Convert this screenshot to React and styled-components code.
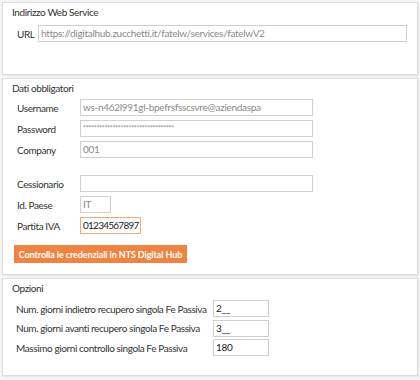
import React from "react";
import styled, { createGlobalStyle } from "styled-components";

// Global //////////////////////////////////////////////////////////
const GlobalStyle = createGlobalStyle`
  html, body {
    margin: 0;
    padding: 0;
    background: #f4f4f4;
    font-family: Lato, "Noto Sans", sans-serif;
    font-size: 10px;
    letter-spacing: -0.4px;
    color: #333;
  }
`;

// Component Styling //////////////////////////////////////////////////////////
const Page = styled.div`
  width: 420px;
  height: 380px;
  box-sizing: border-box;
  padding: 2px 2px 0 2px;
  display: flex;
  flex-direction: column;
  gap: 3px;
`;

const Panel = styled.div`
  box-sizing: border-box;
  width: 416px;
  height: ${(p) => p.h}px;
  background: #fff;
  border: 1px solid #dcdcdc;
  box-shadow: 1px 1px 0 #e8e8e8;
  padding: 2px 0 0 9px;
  display: flex;
  flex-direction: column;
`;

const Title = styled.div`
  line-height: 14px;
  color: #333;
  margin-bottom: ${(p) => p.mb}px;
`;

const Rows = styled.div`
  display: flex;
  flex-direction: column;
  gap: ${(p) => p.gap}px;
  padding-left: ${(p) => p.pl}px;
`;

const Row = styled.div`
  display: grid;
  grid-template-columns: ${(p) => p.lw}px auto;
  align-items: center;
  margin-top: ${(p) => p.mt || 0}px;
`;

const Label = styled.span`
  color: #333;
  white-space: nowrap;
`;

const Field = styled.div`
  box-sizing: border-box;
  width: ${(p) => p.w}px;
  height: 17px;
  border: 1.5px solid ${(p) => (p.focus ? "#f2a878" : "#cfcfcf")};
  background: #fff;
  color: ${(p) => (p.dim ? "#8a8a8a" : "#222")};
  padding: 0 2px;
  line-height: 14px;
  white-space: nowrap;
  overflow: hidden;
  font-size: ${(p) => (p.small ? 7 : 10)}px;
  letter-spacing: ${(p) => (p.focus ? -0.75 : -0.3)}px;
`;

const Button = styled.button`
  align-self: flex-start;
  box-sizing: border-box;
  margin: 11px 0 0 2px;
  height: 18px;
  width: 173px;
  padding: 0;
  border: none;
  background: #f08340;
  color: #fff;
  font-family: Lato, "Noto Sans", sans-serif;
  font-weight: 700;
  font-size: 9px;
  letter-spacing: -0.1px;
  white-space: nowrap;
`;

const App = () => (
  <>
    <GlobalStyle />
    <Page>
      <Panel h={73}>
        <Title mb={6}>Indirizzo Web Service</Title>
        <Rows gap={0} pl={5}>
          <Row lw={21}>
            <Label>URL</Label>
            <Field w={369} dim>
              https://digitalhub.zucchetti.it/fatelw/services/fatelwV2
            </Field>
          </Row>
        </Rows>
      </Panel>

      <Panel h={197}>
        <Title mb={4}>Dati obbligatori</Title>
        <Rows gap={4} pl={5}>
          <Row lw={63}>
            <Label>Username</Label>
            <Field w={233} dim>
              ws-n462l991gl-bpefrsfsscsvre@aziendaspa
            </Field>
          </Row>
          <Row lw={63}>
            <Label>Password</Label>
            <Field w={233} dim small>
              **********************************
            </Field>
          </Row>
          <Row lw={63}>
            <Label>Company</Label>
            <Field w={233} dim>
              001
            </Field>
          </Row>
          <Row lw={63} mt={13}>
            <Label>Cessionario</Label>
            <Field w={233} />
          </Row>
          <Row lw={63}>
            <Label>Id. Paese</Label>
            <Field w={31} dim>
              IT
            </Field>
          </Row>
          <Row lw={63}>
            <Label>Partita IVA</Label>
            <Field w={61} focus>
              01234567897
            </Field>
          </Row>
        </Rows>
        <Button>Controlla le credenziali in NTS Digital Hub</Button>
      </Panel>

      <Panel h={98}>
        <Title mb={5}>Opzioni</Title>
        <Rows gap={2.5} pl={4}>
          <Row lw={197}>
            <Label>Num. giorni indietro recupero singola Fe Passiva</Label>
            <Field w={56}>2__</Field>
          </Row>
          <Row lw={197}>
            <Label>Num. giorni avanti recupero singola Fe Passiva</Label>
            <Field w={56}>3__</Field>
          </Row>
          <Row lw={197}>
            <Label>Massimo giorni controllo singola Fe Passiva</Label>
            <Field w={56}>180</Field>
          </Row>
        </Rows>
      </Panel>
    </Page>
  </>
);

export default App;
